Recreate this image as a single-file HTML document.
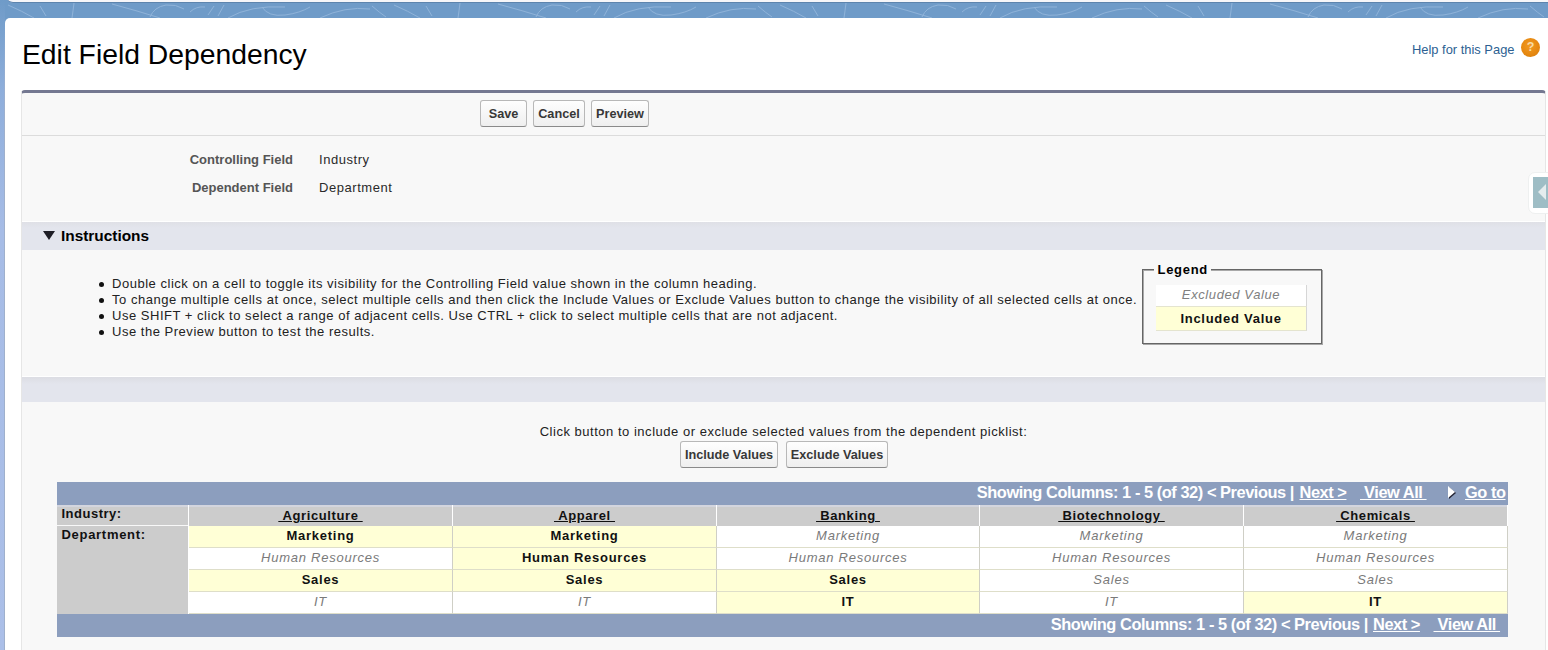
<!DOCTYPE html>
<html><head><meta charset="utf-8">
<style>
*{box-sizing:border-box;margin:0;padding:0}
html,body{width:1548px;height:650px;overflow:hidden}
body{font-family:"Liberation Sans",sans-serif;background:#6f9bc8;position:relative;color:#000}
.abs{position:absolute}
#topstrip{left:7px;top:-10px;width:1541px;height:13px;background:#f6f6f9;border-radius:0 0 0 6px;border-bottom:1px solid #5d84ad}
#leftstrip{left:0;top:0;width:5px;height:650px;background:linear-gradient(180deg,#6f9bc8 0,#8eaedb 90px,#a6bce6 230px,#abbfe8 650px)}
#stripline{left:4px;top:24px;width:1px;height:626px;background:linear-gradient(rgba(150,170,200,0),#9fb0cc 100px)}
#main{left:5px;top:18px;width:1543px;height:640px;background:#fff;border-radius:5px 0 0 0}
#title{left:22px;top:37px;font-size:28.3px;line-height:34px;color:#000;white-space:nowrap}
#help{left:1412px;top:42px;font-size:12.9px;line-height:16px;color:#2d5f92;white-space:nowrap}
#helpicon{left:1521px;top:38px;width:19px;height:19px;border-radius:50%;background:radial-gradient(circle at 45% 40%,#f29a22,#e5870f 60%,#cc7a14);color:#f7dca6;font-weight:bold;font-size:12.5px;text-align:center;line-height:19px}
#pb{left:21px;top:90px;width:1525px;height:570px;background:#f8f8f8;border-top:3px solid #747891;border-radius:4px 4px 0 0;border-left:1px solid #e6e6e6;border-right:1px solid #e6e6e6}
#btnrow{left:22px;top:93px;width:1523px;height:43px;border-bottom:1px solid #dcdcdc}
.btn{position:absolute;height:27px;border:1px solid #b8b8b8;border-bottom-color:#8a8a8a;border-radius:3px;background:linear-gradient(#fefefe,#efefef);font-weight:bold;font-size:12.7px;color:#383838;text-align:center;line-height:26px;white-space:nowrap}
.lbl{font-size:13px;font-weight:bold;color:#555;white-space:nowrap;text-align:right;line-height:16px}
.val{font-size:13px;color:#2a2a2a;white-space:nowrap;letter-spacing:0.55px;line-height:16px}
#instr{left:22px;top:221px;width:1523px;height:29px;background:linear-gradient(#dfe0e6,#e3e5ed 6px);border-top:1px solid #fff}
#instrtxt{left:61px;top:227px;font-size:15.4px;line-height:18px;font-weight:bold;color:#000}
#tri{left:43px;top:231px;width:0;height:0;border-left:6px solid transparent;border-right:6px solid transparent;border-top:9px solid #1e1e26}
ul.bul{position:absolute;left:112px;top:276px;font-size:13px;line-height:16px;color:#222;list-style:none;white-space:nowrap;letter-spacing:0.52px}
ul.bul li{position:relative}
ul.bul li:before{content:"";position:absolute;left:-13px;top:6px;width:5px;height:5px;border-radius:50%;background:#111}
#legend{left:1142px;top:269px;width:180px;height:75px;border:1px solid #666;box-shadow:inset 1px 1px 0 #a8a8a8,1px 1px 0 #a8a8a8}
#legendlbl{left:1154px;top:262px;padding:0 3px 0 3.5px;background:#f8f8f8;font-size:13px;font-weight:bold;line-height:16px;letter-spacing:0.7px}
.lg{position:absolute;left:1156px;width:151px;height:24px;text-align:center;font-size:13px;line-height:22px;border-right:1px solid #d6d6d6;border-bottom:1px solid #e4e4cf}
#bar2{left:22px;top:376px;width:1523px;height:26px;background:linear-gradient(#dcdde3,#e3e5ed 7px);border-top:1px solid #fff}
#clicktxt{left:22px;width:1523px;top:424px;text-align:center;font-size:13px;line-height:16px;color:#222;letter-spacing:0.52px;white-space:nowrap}
#tab{left:1528px;top:172px;width:30px;height:42px;background:#fff;border-radius:7px;border:1px solid #eef0f0}
#tabin{left:1533px;top:177px;width:20px;height:31px;background:#9ebdc5}
#tabtri{left:1538px;top:184px;width:0;height:0;border-top:8px solid transparent;border-bottom:8px solid transparent;border-right:8px solid #e4ecee}
.bar{position:absolute;left:57px;width:1451px;height:23px;background:#8c9ebe;color:#fff;font-weight:bold;font-size:16.4px;line-height:22px;text-align:right;white-space:nowrap;overflow:hidden}
.bar u{text-decoration:underline}
.bt{position:absolute;height:23px;color:#fff;font-weight:bold;font-size:16.4px;line-height:20.5px;white-space:nowrap;letter-spacing:-0.45px}
.bt u{text-decoration:underline}
.lab{position:absolute;left:57px;width:131px;background:#cccccc;font-size:13px;font-weight:bold;padding-left:4.5px;line-height:16px;letter-spacing:0.5px;color:#111}
.th{position:absolute;top:505px;height:21px;background:#cccccc;border-right:1px solid #fff;text-align:center;font-size:13px;font-weight:bold;line-height:21px;white-space:nowrap;letter-spacing:0.6px;color:#111;box-shadow:inset 0 2px 0 #d3d5de}
.th .u{text-decoration:underline}
.td{position:absolute;height:22px;border-right:1px solid #cfcfc6;border-bottom:1px solid #dedec9;text-align:center;font-size:13px;line-height:19px;white-space:nowrap}
.inc{background:#ffffd6;font-weight:bold;color:#111;letter-spacing:0.73px}
.exc{background:#fff;font-style:italic;color:#7a7a7a;letter-spacing:0.75px}
</style></head><body>
<div id="leftstrip" class="abs"></div>
<div id="stripline" class="abs"></div>
<svg class="abs" style="left:0;top:3px" width="1548" height="15"><defs><pattern id="sw" width="386" height="15" patternUnits="userSpaceOnUse"><g fill="none" stroke="#a9c6e6" stroke-width="1" opacity="0.55"><path d="M8 2 Q22 8 34 15"/><path d="M40 3 L46 13"/><path d="M74 0 Q73 8 72 15"/><path d="M112 1 Q138 8 160 15"/><path d="M150 14 Q154 4 166 2 Q176 1 184 6"/><path d="M190 9 Q196 3 205 4"/><path d="M208 12 L214 3 M218 13 L224 2"/><path d="M228 15 Q250 2 285 4"/><path d="M262 4 Q268 14 285 12 Q300 10 310 4"/><path d="M320 15 Q345 3 370 6"/><path d="M372 3 Q380 10 386 14"/></g></pattern></defs><rect width="1548" height="15" fill="url(#sw)"/></svg>
<div id="topstrip" class="abs"></div>
<div id="main" class="abs"></div>
<div id="title" class="abs">Edit Field Dependency</div>
<div id="help" class="abs">Help for this Page</div>
<div id="helpicon" class="abs">?</div>
<div id="pb" class="abs"></div>
<div id="btnrow" class="abs"></div>
<div class="btn" style="left:480px;top:100px;width:47px">Save</div>
<div class="btn" style="left:533px;top:100px;width:52px">Cancel</div>
<div class="btn" style="left:591px;top:100px;width:58px">Preview</div>
<div class="abs lbl" style="left:100px;width:193px;top:151.5px">Controlling Field</div>
<div class="abs val" style="left:319px;top:152px">Industry</div>
<div class="abs lbl" style="left:100px;width:193px;top:179.5px">Dependent Field</div>
<div class="abs val" style="left:319px;top:180px">Department</div>
<div id="tab" class="abs"></div>
<div id="tabin" class="abs"></div>
<div id="tabtri" class="abs"></div>
<div id="instr" class="abs"></div>
<div id="tri" class="abs"></div>
<div id="instrtxt" class="abs">Instructions</div>
<ul class="bul">
<li>Double click on a cell to toggle its visibility for the Controlling Field value shown in the column heading.</li>
<li>To change multiple cells at once, select multiple cells and then click the Include Values or Exclude Values button to change the visibility of all selected cells at once.</li>
<li>Use SHIFT + click to select a range of adjacent cells. Use CTRL + click to select multiple cells that are not adjacent.</li>
<li>Use the Preview button to test the results.</li>
</ul>
<div id="legend" class="abs"></div>
<div id="legendlbl" class="abs">Legend</div>
<div class="lg" style="top:285px;height:22px;line-height:20px;background:#fff;font-style:italic;color:#808080;letter-spacing:0.6px">Excluded Value</div>
<div class="lg" style="top:307px;line-height:24px;background:#ffffd6;font-weight:bold;color:#111;letter-spacing:0.73px">Included Value</div>
<div id="bar2" class="abs"></div>
<div id="clicktxt" class="abs">Click button to include or exclude selected values from the dependent picklist:</div>
<div class="btn" style="left:680px;top:441px;width:98px">Include Values</div>
<div class="btn" style="left:786px;top:441px;width:102px">Exclude Values</div>
<div class="bar" style="top:482px"></div>
<div class="bt" style="top:482px;right:calc(1548px - 1294px)">Showing Columns: 1 - 5 (of 32) &lt; Previous |</div>
<div class="bt" style="top:482px;left:1299.5px"><u>Next &gt;</u></div>
<div class="bt" style="top:482px;left:1360px"><u>&nbsp;View All&nbsp;</u></div>
<div class="abs" style="left:1448px;top:486px;width:0;height:0;border-top:6px solid transparent;border-bottom:6px solid transparent;border-left:7px solid #fff;filter:drop-shadow(1px 1px 0 #223)"></div>
<div class="bt" style="top:482px;left:1465px"><u>Go to</u></div>
<div class="lab" style="top:505px;height:20px;padding-top:1px;box-shadow:inset 0 2px 0 #d3d5de">Industry:</div>
<div class="lab" style="top:526px;height:88px;padding-top:0.5px;letter-spacing:0.7px">Department:</div>
<div class="abs" style="left:188px;top:505px;width:1px;height:109px;background:#fff"></div>
<div class="th" style="left:189px;width:264px"><span class="u">&nbsp;Agriculture&nbsp;</span></div>
<div class="td inc" style="left:189px;top:526px;width:264px">Marketing</div>
<div class="td exc" style="left:189px;top:548px;width:264px">Human Resources</div>
<div class="td inc" style="left:189px;top:570px;width:264px">Sales</div>
<div class="td exc" style="left:189px;top:592px;width:264px">IT</div>
<div class="th" style="left:453px;width:264px"><span class="u">&nbsp;Apparel&nbsp;</span></div>
<div class="td inc" style="left:453px;top:526px;width:264px">Marketing</div>
<div class="td inc" style="left:453px;top:548px;width:264px">Human Resources</div>
<div class="td inc" style="left:453px;top:570px;width:264px">Sales</div>
<div class="td exc" style="left:453px;top:592px;width:264px">IT</div>
<div class="th" style="left:717px;width:263px"><span class="u">&nbsp;Banking&nbsp;</span></div>
<div class="td exc" style="left:717px;top:526px;width:263px">Marketing</div>
<div class="td exc" style="left:717px;top:548px;width:263px">Human Resources</div>
<div class="td inc" style="left:717px;top:570px;width:263px">Sales</div>
<div class="td inc" style="left:717px;top:592px;width:263px">IT</div>
<div class="th" style="left:980px;width:264px"><span class="u">&nbsp;Biotechnology&nbsp;</span></div>
<div class="td exc" style="left:980px;top:526px;width:264px">Marketing</div>
<div class="td exc" style="left:980px;top:548px;width:264px">Human Resources</div>
<div class="td exc" style="left:980px;top:570px;width:264px">Sales</div>
<div class="td exc" style="left:980px;top:592px;width:264px">IT</div>
<div class="th" style="left:1244px;width:264px"><span class="u">&nbsp;Chemicals&nbsp;</span></div>
<div class="td exc" style="left:1244px;top:526px;width:264px">Marketing</div>
<div class="td exc" style="left:1244px;top:548px;width:264px">Human Resources</div>
<div class="td exc" style="left:1244px;top:570px;width:264px">Sales</div>
<div class="td inc" style="left:1244px;top:592px;width:264px">IT</div>
<div class="bar" style="top:614px"></div>
<div class="bt" style="top:614px;right:calc(1548px - 1368px)">Showing Columns: 1 - 5 (of 32) &lt; Previous |</div>
<div class="bt" style="top:614px;left:1373px"><u>Next &gt;</u></div>
<div class="bt" style="top:614px;left:1433.5px"><u>&nbsp;View All&nbsp;</u></div>
</body></html>
